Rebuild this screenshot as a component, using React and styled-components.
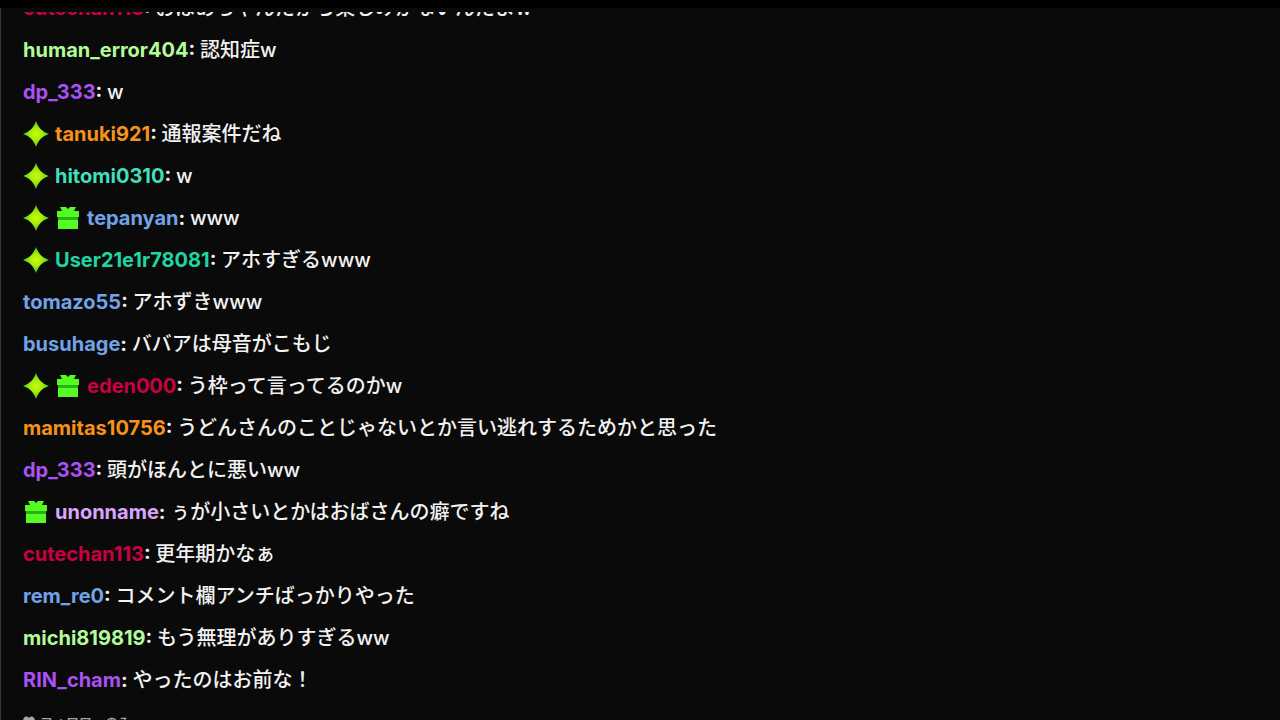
import React from 'react';
import styled, { createGlobalStyle } from 'styled-components';

const messages = [
  { id: 1, name: 'cutechan113', color: '#cb0040', text: 'おばあちゃんだから楽しみがないんだよw' },
  { id: 2, name: 'human_error404', color: '#b2fb98', text: '認知症w' },
  { id: 3, name: 'dp_333', color: '#ab51f3', text: 'w' },
  { id: 4, name: 'tanuki921', color: '#f6921a', badges: ['star'], text: '通報案件だね' },
  { id: 5, name: 'hitomi0310', color: '#43dfba', badges: ['star'], text: 'w' },
  { id: 6, name: 'tepanyan', color: '#72a3e8', badges: ['star', 'gift'], text: 'www' },
  { id: 7, name: 'User21e1r78081', color: '#20d5a4', badges: ['star'], text: 'アホすぎるwww' },
  { id: 8, name: 'tomazo55', color: '#72a3e8', text: 'アホずきwww' },
  { id: 9, name: 'busuhage', color: '#72a3e8', text: 'ババアは母音がこもじ' },
  { id: 10, name: 'eden000', color: '#cb0040', badges: ['star', 'gift'], text: 'う枠って言ってるのかw' },
  { id: 11, name: 'mamitas10756', color: '#f6921a', text: 'うどんさんのことじゃないとか言い逃れするためかと思った' },
  { id: 12, name: 'dp_333', color: '#ab51f3', text: '頭がほんとに悪いww' },
  { id: 13, name: 'unonname', color: '#d8a5fa', badges: ['gift'], text: 'ぅが小さいとかはおばさんの癖ですね' },
  { id: 14, name: 'cutechan113', color: '#cb0040', text: '更年期かなぁ' },
  { id: 15, name: 'rem_re0', color: '#72a3e8', text: 'コメント欄アンチばっかりやった' },
  { id: 16, name: 'michi819819', color: '#b2fb98', text: 'もう無理がありすぎるww' },
  { id: 17, name: 'RIN_cham', color: '#ab51f3', text: 'やったのはお前な！' },
];

const StarBadge = () => (
  <Badge viewBox="0 0 26 26" aria-hidden="true">
    <defs>
      <radialGradient id="starFill">
        <stop offset="0" stopColor="#d0fa08" />
        <stop offset="0.4" stopColor="#a9f00d" />
        <stop offset="1" stopColor="#46cf16" />
      </radialGradient>
    </defs>
    <path
      d="M13 0C15.4 6.8 19.2 10.6 26 13C19.2 15.4 15.4 19.2 13 26C10.6 19.2 6.8 15.4 0 13C6.8 10.6 10.6 6.8 13 0Z"
      fill="url(#starFill)"
    />
  </Badge>
);

const GiftBadge = () => (
  <Badge viewBox="0 0 26 26" aria-hidden="true">
    <path d="M5 2H11L13 4L15 2H21L19 6H24V12H2V6H7Z" fill="#55fc24" />
    <path d="M3 12H23V15H3Z" fill="#28b313" />
    <path d="M3 15H23V24H3Z" fill="#55fc24" />
  </Badge>
);

const ChatMessage = ({ message }) => {
  const { name, color, badges = [], text } = message;

  return (
    <MessageRow>
      {badges.map(badge =>
        badge === 'star' ? <StarBadge key={badge} /> : <GiftBadge key={badge} />
      )}
      <MessageText>
        <UserName $color={color}>{name}</UserName>
        <Colon>: </Colon>
        {text}
      </MessageText>
    </MessageRow>
  );
};

const App = () => {
  return (
    <>
      <GlobalStyle />
      <Page>
        <ChatPanel>
          <MessageList>
            {messages.map(message => (
              <ChatMessage key={message.id} message={message} />
            ))}
          </MessageList>
          <ChatFooter>
            <HeartIcon viewBox="0 0 12 12" aria-hidden="true">
              <path
                d="M6 11.5L1 6.5C-1 4 1 0.5 3.5 0.5C4.7 0.5 5.5 1.2 6 2C6.5 1.2 7.3 0.5 8.5 0.5C11 0.5 13 4 11 6.5Z"
                fill="#a6a6a6"
              />
            </HeartIcon>
            フォロワーのみ
          </ChatFooter>
        </ChatPanel>
      </Page>
    </>
  );
};

export default App;

const GlobalStyle = createGlobalStyle`
  * {
    box-sizing: border-box;
  }

  body {
    margin: 0;
    background: #000000;
    font-family: Inter, 'Noto Sans CJK JP', sans-serif;
  }
`;

const Page = styled.main`
  height: 100vh;
  padding-top: 8px;
  overflow: hidden;
`;

const ChatPanel = styled.section`
  height: 100%;
  padding-top: 4px;
  display: flex;
  flex-direction: column;
  border-left: 1px solid #343638;
  background: #0a0a0a;
`;

const MessageList = styled.ul`
  flex: 1;
  min-height: 0;
  margin: 0;
  padding: 0 22px;
  display: flex;
  flex-direction: column;
  justify-content: flex-end;
  overflow: hidden;
  list-style: none;
`;

const MessageRow = styled.li`
  flex-shrink: 0;
  min-height: 42px;
  display: flex;
  align-items: center;
  gap: 6px;
`;

const Badge = styled.svg`
  flex-shrink: 0;
  width: 26px;
  height: 26px;
`;

const MessageText = styled.span`
  color: #f2f2f2;
  font-size: 20px;
  font-weight: 500;
  line-height: 30px;
`;

const UserName = styled.span`
  color: ${({ $color }) => $color};
  font-weight: 700;
`;

const Colon = styled.span`
  font-weight: 700;
`;

const ChatFooter = styled.footer`
  height: 19px;
  padding: 11px 22px 0;
  display: flex;
  gap: 5px;
  overflow: hidden;
  color: #a6a6a6;
  font-size: 13px;
  font-weight: 500;
  line-height: 20px;
`;

const HeartIcon = styled.svg`
  flex-shrink: 0;
  width: 12px;
  height: 12px;
  margin-top: 4px;
`;
